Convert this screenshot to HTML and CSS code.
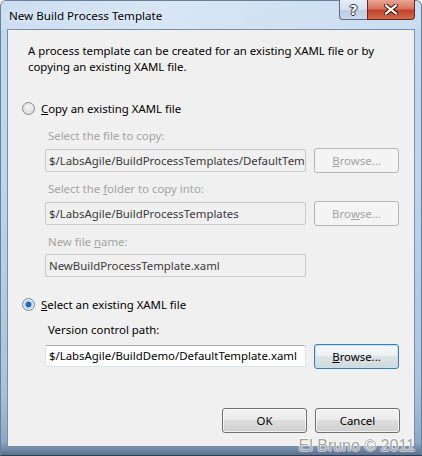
FILE: index.html
```html
<!DOCTYPE html>
<html>
<head>
<meta charset="utf-8">
<link rel="stylesheet" href="styles.css">
</head>
<body>
<div class="window">
  <div class="titlebar">
    <span class="title">New Build Process Template</span>
    <div class="caption-btns">
      <div class="cap help">?</div>
      <div class="cap close">
        <svg width="14" height="11" viewBox="0 0 14 11"><path d="M2 1.5 L12 9.5 M12 1.5 L2 9.5" stroke="#3a1810" stroke-width="4.2" stroke-linecap="square"/><path d="M2 1.5 L12 9.5 M12 1.5 L2 9.5" stroke="#ffffff" stroke-width="2.2" stroke-linecap="square"/></svg>
      </div>
    </div>
  </div>
  <div class="client">
    <p class="intro">A process template can be created for an existing XAML file or by<br>copying an existing XAML file.</p>

    <div class="radio-row r1"><span class="radio"></span><span><u>C</u>opy an existing XAML file</span></div>
    <div class="group">
      <div class="lbl dis first">Select the file to copy:</div>
      <div class="row">
        <div class="input dis">$/LabsAgile/BuildProcessTemplates/DefaultTem</div>
        <div class="btn dis"><u>B</u>rowse...</div>
      </div>
      <div class="lbl dis">Select the <u>f</u>older to copy into:</div>
      <div class="row">
        <div class="input dis">$/LabsAgile/BuildProcessTemplates</div>
        <div class="btn dis">Bro<u>w</u>se...</div>
      </div>
      <div class="lbl dis">New file <u>n</u>ame:</div>
      <div class="row">
        <div class="input dis">NewBuildProcessTemplate.xaml</div>
      </div>
    </div>

    <div class="radio-row r2"><span class="radio checked"></span><span><u>S</u>elect an existing XAML file</span></div>
    <div class="group">
      <div class="lbl vcp">Version control path:</div>
      <div class="row">
        <div class="input active">$/LabsAgile/BuildDemo/DefaultTemplate.xaml</div>
        <div class="btn default"><u>B</u>rowse...</div>
      </div>
    </div>

    <div class="footer">
      <div class="btn">OK</div>
      <div class="btn">Cancel</div>
    </div>
  </div>
  <div class="watermark">El Bruno © 2011</div>
</div>
</body>
</html>
```
FILE: styles.css
```css
* { box-sizing: border-box; }
html, body { margin: 0; padding: 0; }
body {
  width: 422px;
  height: 456px;
  overflow: hidden;
  font-family: "Noto Sans", "Open Sans", sans-serif;
  font-size: 11.4px;
  color: #000;
}
.window {
  position: relative;
  width: 422px;
  height: 456px;
  display: flex;
  flex-direction: column;
  border-radius: 6px 6px 0 0;
  border: 1px solid #6a7f98;
  border-bottom-color: #2f3d4e;
  background: linear-gradient(180deg, #c3d9ef 0%, #bed5ed 40%, #a9c3df 85%, #8ea9c8 97%, #5b7290 100%);
}
.titlebar {
  height: 28px;
  display: flex;
  align-items: flex-start;
  padding-left: 8px;
  background: linear-gradient(90deg, rgba(255,255,255,0.15), rgba(255,255,255,0.35) 40%, rgba(255,255,255,0.1));
}
.title {
  margin-top: 7px;
  font-size: 11.6px;
  color: #000;
  text-shadow: 0 0 6px rgba(255,255,255,0.9);
}
.caption-btns {
  margin-left: auto;
  margin-right: 6px;
  display: flex;
  margin-top: -1px;
}
.cap {
  height: 20px;
  display: flex;
  align-items: center;
  justify-content: center;
  border: 1px solid #5a6d84;
  border-top: none;
}
.help {
  width: 28px;
  border-radius: 0 0 0 4px;
  border-right: none;
  background: linear-gradient(180deg, #e6eef7 0%, #d3e0ee 50%, #bccde1 51%, #c9d8ea 100%);
  font-family: "DejaVu Sans", sans-serif;
  font-weight: bold;
  font-size: 14px;
  color: #fff;
  text-shadow: -1px 0 #333, 1px 0 #333, 0 -1px #333, 0 1px #333;
}
.close {
  width: 48px;
  border-radius: 0 0 4px 0;
  border-color: #6d261c;
  background: linear-gradient(180deg, #e8a493 0%, #d8755f 45%, #c2432b 55%, #cf6a4a 100%);
}
.client {
  margin: 0 6px 8px 6px;
  height: 419px;
  border: 1px solid #7c8ea3;
  background: #f0f0f0;
  display: flex;
  flex-direction: column;
  padding: 0 14px 13px 0;
}
.intro {
  margin: 13px 0 0 20px;
  line-height: 16px;
}
.radio-row {
  display: flex;
  align-items: center;
  height: 16px;
  padding-left: 14px;
}
.r1 { margin-top: 26px; }
.r2 { margin-top: 20px; }
.radio {
  width: 13px;
  height: 13px;
  border-radius: 50%;
  border: 1px solid #8b8b8b;
  background: radial-gradient(circle at 50% 40%, #f5f5f5 0%, #e2e2e2 55%, #cfcfcf 100%);
  margin-right: 6px;
  position: relative;
  flex: none;
}
.radio.checked {
  border-color: #6f8aa6;
  background: radial-gradient(circle at 50% 50%, #2c7bc4 0%, #1b5a98 28%, #8fb4d8 36%, #e8eef5 60%, #cad6e3 100%);
}
.group {
  padding-left: 37px;
  display: flex;
  flex-direction: column;
}
.lbl {
  padding-left: 3px;
  line-height: 16px;
  margin-top: 8px;
}
.lbl.first { margin-top: 11px; }
.lbl.vcp { margin-top: 9px; }
.lbl.dis { color: #a3a3a3; }
.row {
  display: flex;
  align-items: center;
  margin-top: 4px;
  gap: 8px;
}
.vcp + .row { margin-top: 6px; }
.input {
  width: 261px;
  height: 23px;
  padding: 0 3px;
  line-height: 21px;
  white-space: nowrap;
  overflow: hidden;
  border: 1px solid #c9c9c9;
  border-radius: 2px;
  background: #f0f0f0;
  color: #3a3a3a;
}
.input.active {
  background: #fff;
  color: #000;
  border-color: #dde3ea;
  border-top-color: #abadb3;
  height: 22px;
  line-height: 20px;
}
.btn {
  width: 85px;
  height: 25px;
  display: flex;
  align-items: center;
  justify-content: center;
  border: 1px solid #707070;
  border-radius: 3px;
  background: linear-gradient(180deg, #f3f3f3 0%, #ebebeb 49%, #dddddd 50%, #cfcfcf 100%);
  box-shadow: inset 0 0 0 1px rgba(255,255,255,0.7);
  color: #000;
}
.btn.dis {
  border-color: #b5b5b5;
  background: #f4f4f4;
  box-shadow: none;
  color: #a3a3a3;
}
.btn.default {
  border-color: #3c7fb1;
  box-shadow: inset 0 0 0 1px #bde4f6;
  background: linear-gradient(180deg, #f5f8fa 0%, #eaf0f4 49%, #dde4e8 50%, #d1d8dc 100%);
}
.footer {
  margin-top: auto;
  display: flex;
  justify-content: flex-end;
  gap: 8px;
}
.watermark {
  position: absolute;
  right: 6px;
  bottom: 0px;
  font-family: "Liberation Sans", Arial, sans-serif;
  font-size: 16px;
  line-height: 18px;
  color: rgba(140,140,140,0.8);
  text-shadow: -1px 0 rgba(255,255,255,0.6), 1px 0 rgba(255,255,255,0.6), 0 -1px rgba(255,255,255,0.6), 0 1px rgba(255,255,255,0.6);
}
```
